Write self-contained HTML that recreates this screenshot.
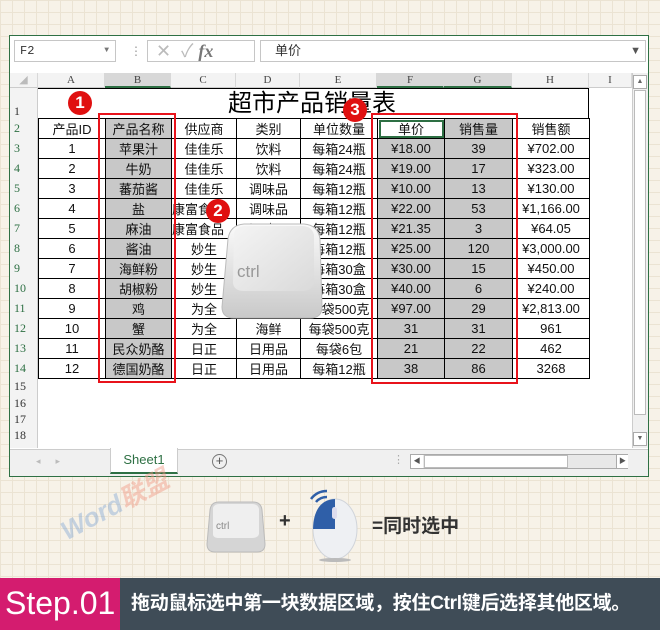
<!DOCTYPE html>
<html><head><meta charset="utf-8"><style>
*{margin:0;padding:0;box-sizing:border-box}
body{width:660px;height:630px;overflow:hidden;position:relative;font-family:"Liberation Sans","Noto Sans CJK SC",sans-serif;
background-color:#f7f2e8;background-image:linear-gradient(#ebe3d3 1px,transparent 1px),linear-gradient(90deg,#ebe3d3 1px,transparent 1px);background-size:12px 12px}
.abs{position:absolute}
#win{left:9px;top:35px;width:640px;height:442px;background:#fff;border:1px solid #2e7044}
.box{position:absolute;background:#fff;border:1px solid #c6c6c6}
table{border-collapse:collapse;position:absolute;left:38px;top:118px;table-layout:fixed}
td{border:1px solid #000;height:20px;text-align:center;font-size:13px;color:#111;padding:0;white-space:nowrap;overflow:hidden;font-family:"Liberation Sans","Noto Sans CJK SC",sans-serif}
td.g{background:#c8c8c8}
.colh{position:absolute;top:73px;height:15px;font-size:11px;color:#444;text-align:center;font-family:"Liberation Serif",serif;line-height:15px;border-right:1px solid #d8d8d8}
.rn{position:absolute;left:10px;width:28px;font-size:12px;color:#2e7044;text-align:left;padding-left:4px;font-family:"Liberation Serif",serif}
.circ{position:absolute;width:24px;height:24px;border-radius:50%;background:#e01010;color:#fff;font-weight:bold;font-size:17px;text-align:center;line-height:24px}
.red{position:absolute;border:2px solid #e8131b}
</style></head><body>
<div id="win" class="abs"></div>
<div class="box" style="left:14px;top:40px;width:102px;height:22px;font-size:12px;line-height:20px;padding-left:5px;font-family:'Liberation Mono',monospace;color:#333">F2<span style="position:absolute;right:6px;font-size:8px;color:#777">▼</span></div>
<div class="abs" style="left:130px;top:44px;color:#999;font-size:12px">⋮</div>
<div class="box" style="left:147px;top:40px;width:108px;height:22px;color:#bbb;font-size:18px;line-height:20px;padding-left:8px">✕&nbsp;&nbsp;✓&nbsp;<i style="font-family:'Liberation Serif',serif;color:#777;font-weight:bold">fx</i></div>
<div class="box" style="left:260px;top:40px;width:386px;height:22px;font-size:13px;line-height:20px;padding-left:14px;color:#333">单价<span style="position:absolute;right:4px;top:0;font-size:11px;color:#555">▼</span></div>
<div class="abs" style="left:10px;top:73px;width:622px;height:15px;background:#f3f3f3;border-bottom:1px solid #ccc"></div>
<div class="colh" style="left:10px;width:28px;color:#bbb">◢</div>
<div class="colh" style="left:38px;width:67px">A</div>
<div class="colh" style="left:105px;width:66px;background:#d8d8d8;border-bottom:2px solid #2e7044">B</div>
<div class="colh" style="left:171px;width:65px">C</div>
<div class="colh" style="left:236px;width:64px">D</div>
<div class="colh" style="left:300px;width:77px">E</div>
<div class="colh" style="left:377px;width:67px;background:#d8d8d8;border-bottom:2px solid #2e7044">F</div>
<div class="colh" style="left:444px;width:68px;background:#d8d8d8;border-bottom:2px solid #2e7044">G</div>
<div class="colh" style="left:512px;width:77px">H</div>
<div class="colh" style="left:589px;width:43px">I</div>
<div class="abs" style="left:10px;top:88px;width:28px;height:360px;background:#f3f3f3;border-right:1px solid #ccc"></div>
<div class="abs" style="left:38px;top:118px;width:1px;height:260px;background:#2e7044"></div>
<div class="rn" style="top:104px;color:#333">1</div>
<div class="rn" style="top:121px">2</div><div class="rn" style="top:141px">3</div><div class="rn" style="top:161px">4</div><div class="rn" style="top:181px">5</div><div class="rn" style="top:201px">6</div><div class="rn" style="top:221px">7</div><div class="rn" style="top:241px">8</div><div class="rn" style="top:261px">9</div><div class="rn" style="top:281px">10</div><div class="rn" style="top:301px">11</div><div class="rn" style="top:321px">12</div><div class="rn" style="top:341px">13</div><div class="rn" style="top:361px">14</div>
<div class="rn" style="top:379px;color:#333">15</div><div class="rn" style="top:396px;color:#333">16</div><div class="rn" style="top:412px;color:#333">17</div><div class="rn" style="top:428px;color:#333">18</div>
<div class="abs" style="left:38px;top:88px;width:551px;height:30px;border:1px solid #000;border-bottom:none;border-left:none"></div>
<div class="abs" style="left:228px;top:89px;font-size:24px;color:#000;line-height:30px">超市产品销量表</div>
<table>
<colgroup><col style="width:67px"><col style="width:66px"><col style="width:65px"><col style="width:64px"><col style="width:77px"><col style="width:67px"><col style="width:68px"><col style="width:77px"></colgroup>
<tr><td>产品ID</td><td class="g">产品名称</td><td>供应商</td><td>类别</td><td>单位数量</td><td style="outline:2px solid #2e7044;outline-offset:-3px">单价</td><td class="g">销售量</td><td>销售额</td></tr>
<tr><td>1</td><td class="g">苹果汁</td><td>佳佳乐</td><td>饮料</td><td>每箱24瓶</td><td class="g">¥18.00</td><td class="g">39</td><td>¥702.00</td></tr>
<tr><td>2</td><td class="g">牛奶</td><td>佳佳乐</td><td>饮料</td><td>每箱24瓶</td><td class="g">¥19.00</td><td class="g">17</td><td>¥323.00</td></tr>
<tr><td>3</td><td class="g">蕃茄酱</td><td>佳佳乐</td><td>调味品</td><td>每箱12瓶</td><td class="g">¥10.00</td><td class="g">13</td><td>¥130.00</td></tr>
<tr><td>4</td><td class="g">盐</td><td style="text-align:left">康富食品</td><td>调味品</td><td>每箱12瓶</td><td class="g">¥22.00</td><td class="g">53</td><td>¥1,166.00</td></tr>
<tr><td>5</td><td class="g">麻油</td><td style="text-align:left">康富食品</td><td>调味品</td><td>每箱12瓶</td><td class="g">¥21.35</td><td class="g">3</td><td>¥64.05</td></tr>
<tr><td>6</td><td class="g">酱油</td><td>妙生</td><td>调味品</td><td>每箱12瓶</td><td class="g">¥25.00</td><td class="g">120</td><td>¥3,000.00</td></tr>
<tr><td>7</td><td class="g">海鲜粉</td><td>妙生</td><td>特制品</td><td>每箱30盒</td><td class="g">¥30.00</td><td class="g">15</td><td>¥450.00</td></tr>
<tr><td>8</td><td class="g">胡椒粉</td><td>妙生</td><td>调味品</td><td>每箱30盒</td><td class="g">¥40.00</td><td class="g">6</td><td>¥240.00</td></tr>
<tr><td>9</td><td class="g">鸡</td><td>为全</td><td>肉/家禽</td><td>每袋500克</td><td class="g">¥97.00</td><td class="g">29</td><td>¥2,813.00</td></tr>
<tr><td>10</td><td class="g">蟹</td><td>为全</td><td>海鲜</td><td>每袋500克</td><td class="g">31</td><td class="g">31</td><td>961</td></tr>
<tr><td>11</td><td class="g">民众奶酪</td><td>日正</td><td>日用品</td><td>每袋6包</td><td class="g">21</td><td class="g">22</td><td>462</td></tr>
<tr><td>12</td><td class="g">德国奶酪</td><td>日正</td><td>日用品</td><td>每箱12瓶</td><td class="g">38</td><td class="g">86</td><td>3268</td></tr>
</table>
<div class="red" style="left:98px;top:113px;width:78px;height:270px"></div>
<div class="red" style="left:371px;top:113px;width:147px;height:271px"></div>
<div class="circ" style="left:68px;top:91px">1</div>
<div class="circ" style="left:206px;top:199px">2</div>
<div class="circ" style="left:343px;top:98px">3</div>
<svg class="abs" style="left:220px;top:221px" width="104" height="100" viewBox="0 0 104 100">
<defs><linearGradient id="k1" x1="0" y1="0" x2="0" y2="1"><stop offset="0" stop-color="#fafafa"/><stop offset="1" stop-color="#c9c9c9"/></linearGradient>
<linearGradient id="k2" x1="0" y1="0" x2="1" y2="1"><stop offset="0" stop-color="#f4f4f4"/><stop offset="1" stop-color="#dadada"/></linearGradient></defs>
<path d="M8 18 Q10 4 24 3 L84 3 Q98 4 100 18 L102 86 Q102 97 90 97 L14 97 Q2 97 2 86 Z" fill="url(#k1)" stroke="#bbb"/>
<path d="M14 12 Q16 5 26 5 L82 5 Q92 5 94 14 L94 62 Q92 70 82 70 L24 70 Q14 70 13 62 Z" fill="url(#k2)"/>
<text x="17" y="56" font-family="Liberation Sans,sans-serif" font-size="17" fill="#999">ctrl</text>
</svg>
<div class="abs" style="left:632px;top:73px;width:16px;height:375px;background:#f0f0f0;border-left:1px solid #ccc"></div>
<div class="abs" style="left:633px;top:75px;width:14px;height:14px;border:1px solid #aaa;background:#fff;font-size:7px;text-align:center;line-height:12px;color:#666">▲</div>
<div class="abs" style="left:634px;top:90px;width:12px;height:325px;background:#fff;border:1px solid #bbb"></div>
<div class="abs" style="left:633px;top:432px;width:14px;height:14px;border:1px solid #aaa;background:#fff;font-size:7px;text-align:center;line-height:12px;color:#666">▼</div>
<div class="abs" style="left:10px;top:449px;width:638px;height:27px;background:#f0f0f0;border-top:1px solid #ccc"></div>
<div class="abs" style="left:36px;top:456px;font-size:9px;color:#bbb">◂&nbsp;&nbsp;&nbsp;&nbsp;&nbsp;&nbsp;▸</div>
<div class="abs" style="left:110px;top:448px;width:68px;height:26px;background:#fff;border:1px solid #ccc;border-top:none;border-bottom:2px solid #2e7044;color:#2e7044;font-size:13px;text-align:center;line-height:24px">Sheet1</div>
<div class="abs" style="left:212px;top:454px;width:15px;height:15px;border:1px solid #777;border-radius:50%;font-size:13px;line-height:12px;text-align:center;color:#555">+</div>
<div class="abs" style="left:393px;top:453px;font-size:11px;color:#aaa">⋮</div>
<div class="abs" style="left:410px;top:454px;width:218px;height:15px;background:#e8e8e8;border:1px solid #aaa"></div>
<div class="abs" style="left:411px;top:455px;width:12px;height:13px;background:#fff;font-size:7px;line-height:13px;text-align:center;color:#555">◀</div>
<div class="abs" style="left:424px;top:455px;width:144px;height:13px;background:#fff;border:1px solid #bbb"></div>
<div class="abs" style="left:616px;top:455px;width:12px;height:13px;background:#fff;font-size:7px;line-height:13px;text-align:center;color:#555;border-left:1px solid #aaa">▶</div>
<div class="abs" style="left:55px;top:485px;font-size:26px;font-weight:bold;font-style:italic;color:rgba(120,160,210,.4);transform:rotate(-28deg)">Word<span style="color:rgba(240,150,130,.45)">联盟</span></div>
<svg class="abs" style="left:205px;top:500px" width="62" height="54" viewBox="0 0 62 54">
<path d="M5 10 Q6 2 14 2 L48 2 Q56 2 57 10 L60 44 Q60 52 52 52 L10 52 Q2 52 2 44 Z" fill="#d5d5d5" stroke="#bbb"/>
<path d="M8 8 Q9 4 15 4 L47 4 Q53 4 54 9 L54 34 Q53 38 47 38 L14 38 Q8 38 8 34 Z" fill="#efefef"/>
<text x="11" y="29" font-family="Liberation Sans,sans-serif" font-size="10" fill="#888">ctrl</text>
</svg>
<div class="abs" style="left:279px;top:510px;font-size:20px;font-weight:bold;color:#333">+</div>
<svg class="abs" style="left:305px;top:487px" width="56" height="76" viewBox="0 0 56 76">
<path d="M6 12 Q12 4 22 4" stroke="#2f5fa8" stroke-width="2.5" fill="none"/>
<path d="M11 15 Q15 10 22 10" stroke="#2f5fa8" stroke-width="2.5" fill="none"/>
<ellipse cx="30" cy="42" rx="22" ry="30" fill="#eef0f3" stroke="#d0d4da"/>
<path d="M30 12 Q9 13 8 42 L30 42 Z" fill="#2f5fa8"/>
<rect x="27" y="20" width="5" height="12" rx="2.5" fill="#dde"/>
<ellipse cx="30" cy="73" rx="16" ry="2" fill="#bbb"/>
</svg>
<div class="abs" style="left:372px;top:511px;font-size:19px;font-weight:bold;color:#333">=同时选中</div>
<div class="abs" style="left:0;top:578px;width:660px;height:52px;background:#3f4c57"></div>
<div class="abs" style="left:0;top:578px;width:120px;height:52px;background:#d41c6f;color:#fff;font-size:32px;line-height:50px;padding-left:5px">Step.01</div>
<div class="abs" style="left:131px;top:578px;color:#fff;font-size:19px;font-weight:bold;line-height:52px;white-space:nowrap;letter-spacing:-0.3px">拖动鼠标选中第一块数据区域，按住Ctrl键后选择其他区域。</div>
</body></html>
